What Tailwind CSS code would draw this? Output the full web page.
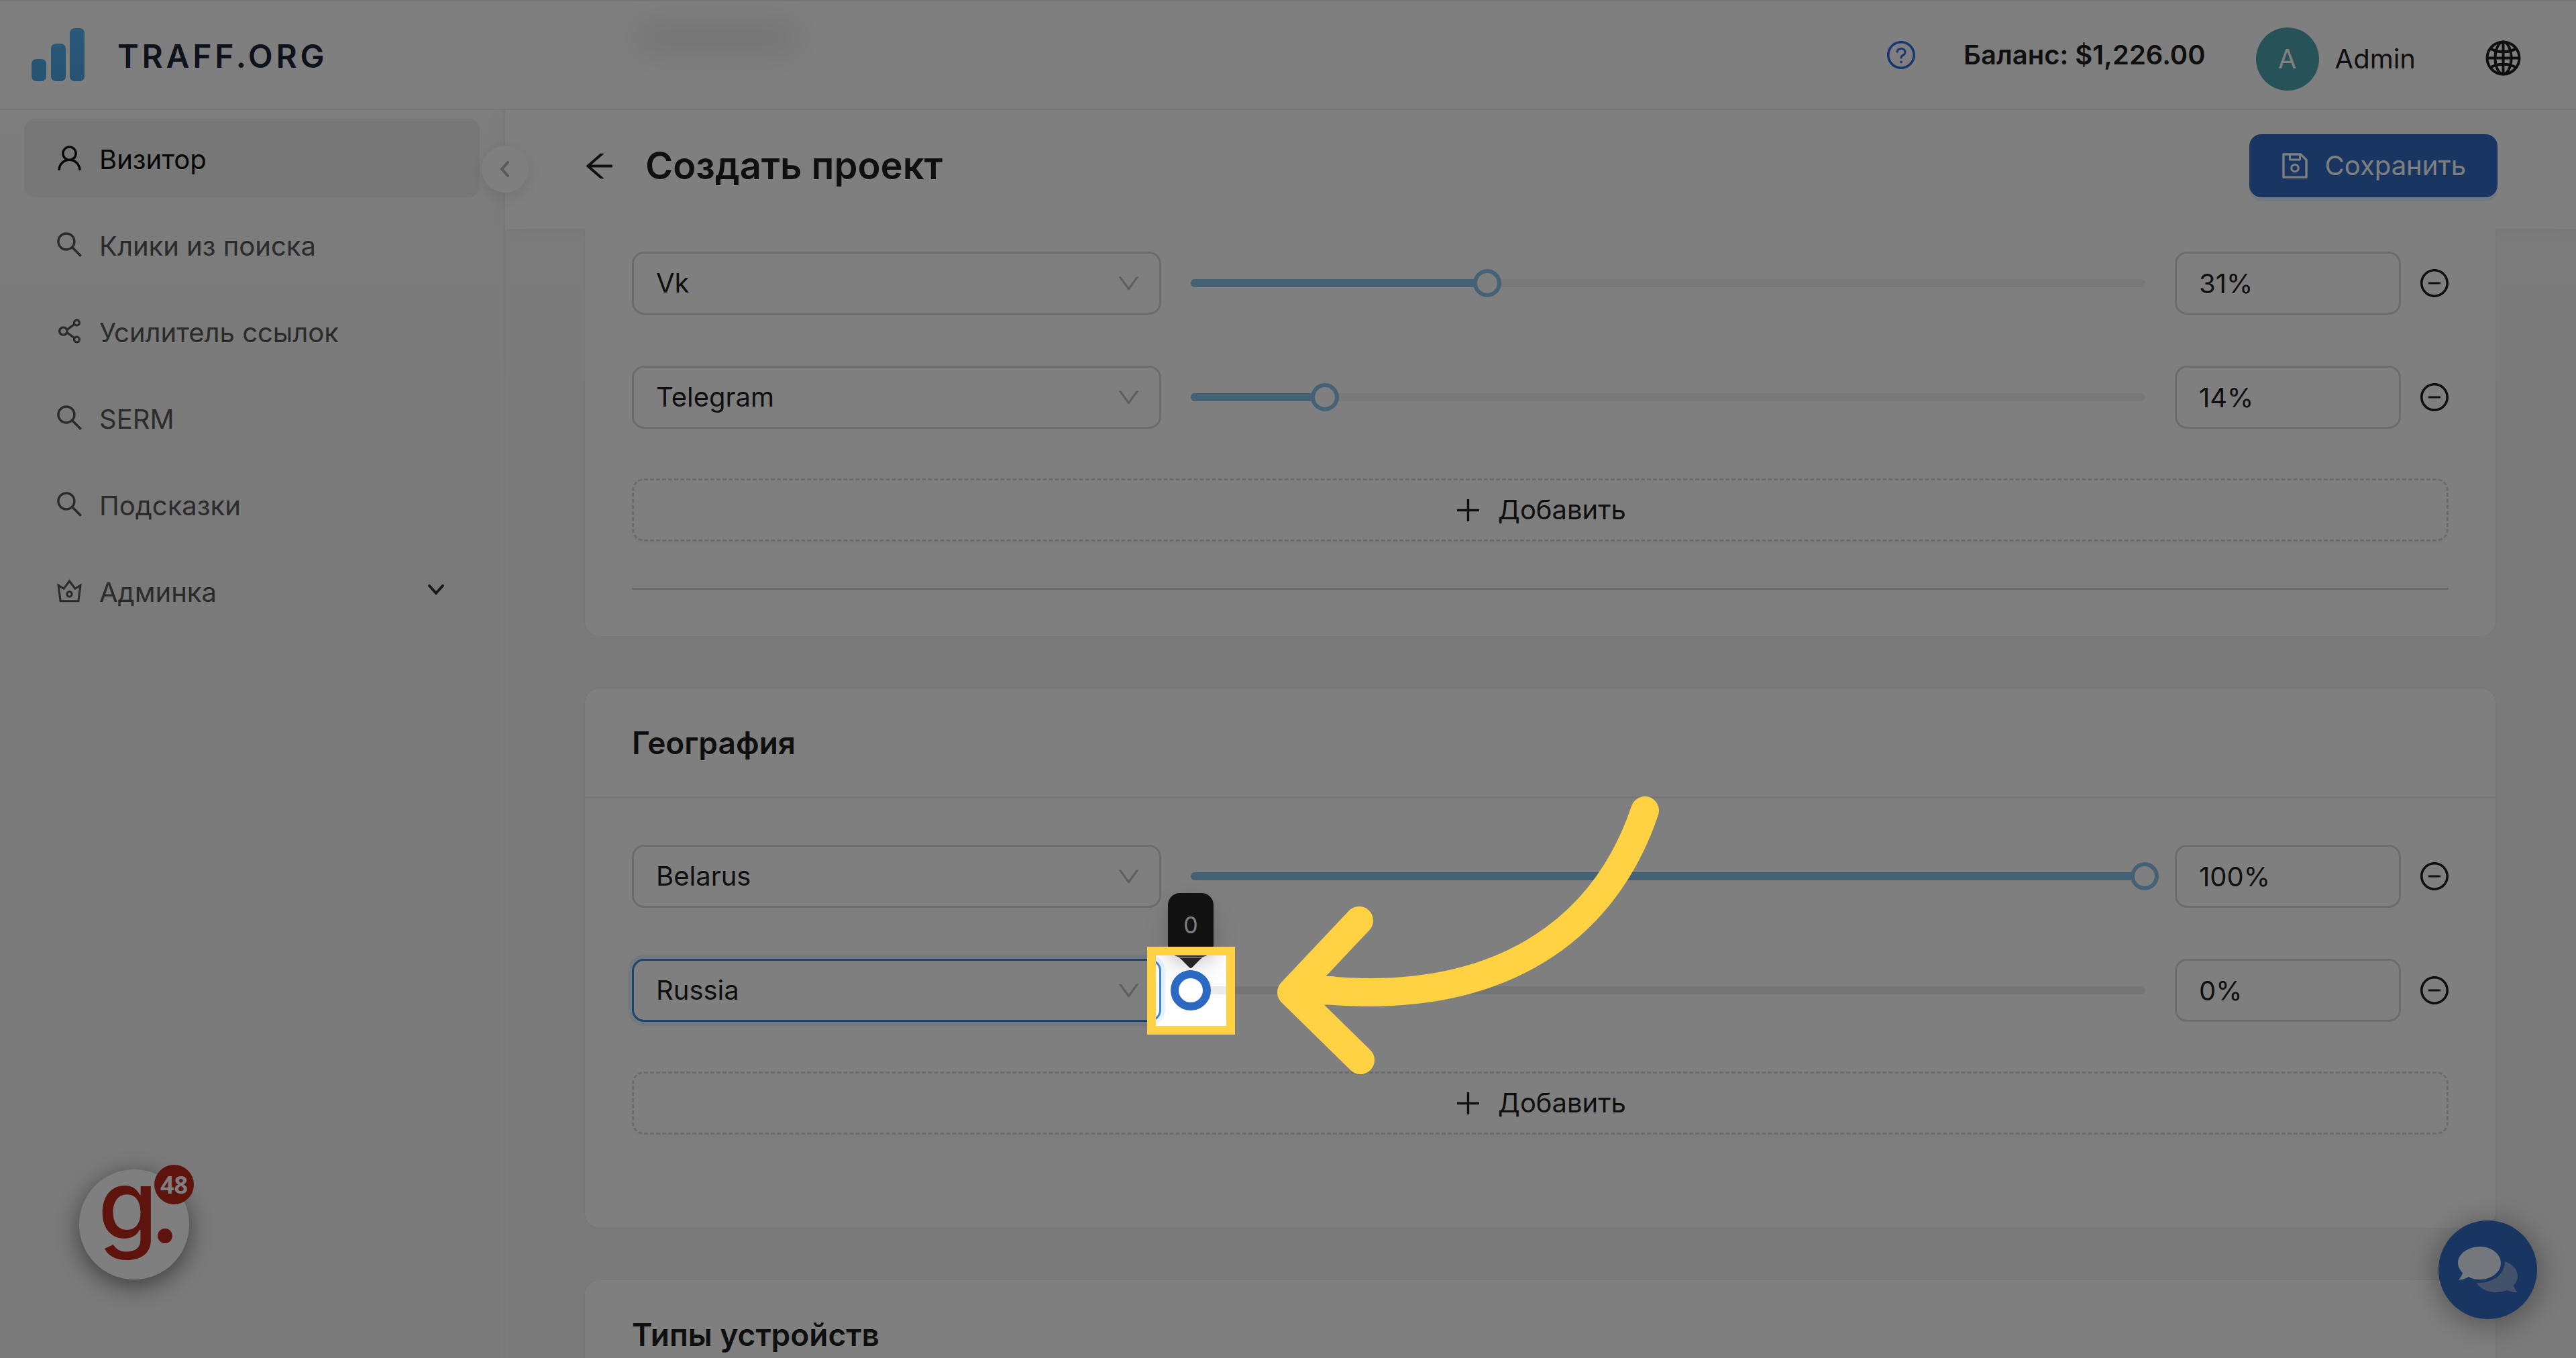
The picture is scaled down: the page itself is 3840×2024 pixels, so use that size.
<!DOCTYPE html>
<html lang="ru">

<head>
    <meta charset="UTF-8">
    <meta name="viewport" content="width=device-width, initial-scale=1.0">
    <title>Создать проект - TRAFF.ORG</title>
    <script src="https://cdn.jsdelivr.net/npm/@tailwindcss/browser@4"></script>
</head>

<body class="bg-[#f5f5f5]">

    <!-- Icon set -->
    <svg class="hidden">
        <symbol id="user" viewBox="64 64 896 896"><path d="M858.5 763.6a374 374 0 00-80.6-119.5 375.63 375.63 0 00-119.5-80.6c-.4-.2-.8-.3-1.2-.5C719.5 518 760 444.7 760 362c0-137-111-248-248-248S264 225 264 362c0 82.7 40.5 156 102.8 201.1-.4.2-.8.3-1.2.5-44.8 18.9-85 46-119.5 80.6a375.63 375.63 0 00-80.6 119.5A371.7 371.7 0 00136 901.8a8 8 0 008 8.2h60c4.4 0 7.9-3.5 8-7.8 2-77.2 33-149.5 87.8-204.3 56.7-56.7 132-87.9 212.2-87.9s155.5 31.2 212.2 87.9C779 752.7 810 825 812 902.2c.1 4.4 3.6 7.8 8 7.8h60a8 8 0 008-8.2c-1-47.8-10.9-94.3-29.5-138.2zM512 534c-45.9 0-89.1-17.9-121.6-50.4S340 407.9 340 362c0-45.9 17.9-89.1 50.4-121.6S466.1 190 512 190s89.1 17.9 121.6 50.4S684 316.1 684 362c0 45.9-17.9 89.1-50.4 121.6S557.9 534 512 534z"/></symbol>
        <symbol id="search" viewBox="64 64 896 896"><path d="M909.6 854.5L649.9 594.8C690.2 542.7 712 479 712 412c0-80.2-31.3-155.4-87.9-212.1-56.6-56.7-132-87.9-212.1-87.9s-155.5 31.3-212.1 87.9C143.2 256.5 112 331.8 112 412c0 80.1 31.3 155.5 87.9 212.1C256.5 680.8 331.8 712 412 712c67 0 130.6-21.8 182.7-62l259.7 259.6a8.2 8.2 0 0011.6 0l43.6-43.5a8.2 8.2 0 000-11.6zM570.4 570.4C528 612.7 471.8 636 412 636s-116-23.3-158.4-65.6C211.3 528 188 471.8 188 412s23.3-116.1 65.6-158.4C296 211.3 352.2 188 412 188s116.1 23.2 158.4 65.6S636 352.2 636 412s-23.3 116.1-65.6 158.4z"/></symbol>
        <symbol id="share" viewBox="64 64 896 896"><path d="M752 664c-28.5 0-54.8 10-75.4 26.7L469.4 540.8a160.68 160.68 0 000-57.6l207.2-149.9C697.2 350 723.5 360 752 360c66.2 0 120-53.8 120-120s-53.8-120-120-120-120 53.8-120 120c0 11.6 1.6 22.7 4.7 33.3L439.9 415.8C410.7 377.1 364.3 352 312 352c-88.4 0-160 71.6-160 160s71.6 160 160 160c52.3 0 98.7-25.1 127.9-63.8l196.8 142.5c-3.1 10.6-4.7 21.8-4.7 33.3 0 66.2 53.8 120 120 120s120-53.8 120-120-53.8-120-120-120zm0-476c28.7 0 52 23.3 52 52s-23.3 52-52 52-52-23.3-52-52 23.3-52 52-52zM312 600c-48.5 0-88-39.5-88-88s39.5-88 88-88 88 39.5 88 88-39.5 88-88 88zm440 236c-28.7 0-52-23.3-52-52s23.3-52 52-52 52 23.3 52 52-23.3 52-52 52z"/></symbol>
        <symbol id="crown" viewBox="64 64 896 896"><path d="M899.6 276.5L705 396.4 518.4 147.5a8.06 8.06 0 00-12.9 0L319 396.4 124.3 276.5c-5.7-3.5-13.1 1.2-12.2 7.9L188.5 865c1.1 7.9 7.9 14 16 14h615.1c8 0 14.9-6 15.9-14l76.4-580.6c.8-6.7-6.5-11.4-12.3-7.9zm-126 534.1H250.3l-53.8-409.4 139.8 86.1L512 252.9l175.7 234.4 139.8-86.1-53.9 409.4zM512 509c-62.1 0-112.6 50.5-112.6 112.6S449.9 734.2 512 734.2s112.6-50.5 112.6-112.6S574.1 509 512 509zm0 160.9c-26.6 0-48.2-21.6-48.2-48.3 0-26.6 21.6-48.3 48.2-48.3s48.2 21.6 48.2 48.3c0 26.6-21.6 48.3-48.2 48.3z"/></symbol>
        <symbol id="save" viewBox="64 64 896 896"><path d="M893.3 293.3L730.7 130.7c-7.5-7.5-16.7-13-26.7-16V112H144c-17.7 0-32 14.3-32 32v736c0 17.7 14.3 32 32 32h736c17.7 0 32-14.3 32-32V338.5c0-17-6.7-33.2-18.7-45.2zM384 184h256v104H384V184zm456 656H184V184h136v136c0 17.7 14.3 32 32 32h320c17.7 0 32-14.3 32-32V205.8l136 136V840zM512 442c-79.5 0-144 64.5-144 144s64.5 144 144 144 144-64.5 144-144-64.5-144-144-144zm0 224c-44.2 0-80-35.8-80-80s35.8-80 80-80 80 35.8 80 80-35.8 80-80 80z"/></symbol>
        <symbol id="back" viewBox="64 64 896 896"><path d="M872 474H286.9l350.2-304c5.6-4.9 2.2-14-5.2-14h-88.5c-3.9 0-7.6 1.4-10.5 3.9L155 487.8a31.96 31.96 0 000 48.3L535.1 866c1.5 1.3 3.3 2 5.2 2h91.5c7.4 0 10.8-9.2 5.2-14L286.9 550H872c4.4 0 8-3.6 8-8v-60c0-4.4-3.6-8-8-8z"/></symbol>
        <symbol id="down" viewBox="64 64 896 896"><path d="M884 256h-75c-5.1 0-9.9 2.5-12.9 6.6L512 654.2 227.9 262.6c-3-4.1-7.8-6.6-12.9-6.6h-75c-6.5 0-10.3 7.4-6.5 12.7l352.6 486.1c12.8 17.6 39 17.6 51.7 0l352.6-486.1c3.9-5.3.1-12.7-6.4-12.7z"/></symbol>
        <symbol id="question" viewBox="64 64 896 896"><path d="M512 64C264.6 64 64 264.6 64 512s200.6 448 448 448 448-200.6 448-448S759.4 64 512 64zm0 820c-205.4 0-372-166.6-372-372s166.6-372 372-372 372 166.6 372 372-166.6 372-372 372z"/><path d="M623.6 316.7C593.6 290.4 554 276 512 276s-81.6 14.5-111.6 40.7C369.2 344 352 380.7 352 420v7.6c0 4.4 3.6 8 8 8h48c4.4 0 8-3.6 8-8V420c0-44.1 43.1-80 96-80s96 35.9 96 80c0 31.1-22 59.6-56.1 72.7-21.2 8.1-39.2 22.3-52.1 40.9-13.1 19-19.9 41.8-19.9 64.9V620c0 4.4 3.6 8 8 8h48c4.4 0 8-3.6 8-8v-22.7a48.3 48.3 0 0130.9-44.8c59-22.7 97.1-74.7 97.1-132.5.1-39.3-17.1-76-48.3-103.3zM472 732a40 40 0 1080 0 40 40 0 10-80 0z"/></symbol>
        <symbol id="minus" viewBox="64 64 896 896"><path d="M696 480H328c-4.400 0-8 3.600-8 8v48c0 4.400 3.600 8 8 8h368c4.400 0 8-3.600 8-8v-48c0-4.400-3.600-8-8-8z"/><path d="M512 64C264.600 64 64 264.600 64 512s200.600 448 448 448 448-200.600 448-448S759.400 64 512 64zm0 820c-205.400 0-372-166.600-372-372s166.600-372 372-372 372 166.600 372 372-166.600 372-372 372z"/></symbol>
        <symbol id="plus" viewBox="64 64 896 896"><path d="M482 152h60q8 0 8 8v704q0 8-8 8h-60q-8 0-8-8V160q0-8 8-8z"/><path d="M160 474h704q8 0 8 8v60q0 8-8 8H160q-8 0-8-8v-60q0-8 8-8z"/></symbol>
    </svg>

    <div class="relative flex h-screen flex-col overflow-hidden bg-[linear-gradient(#ffffff,#f5f5f5_28%)] font-[Inter,'Noto_Sans',sans-serif] text-[40px] leading-[64px] text-[#1f1f1f]">

        <!-- Top bar -->
        <header class="relative flex h-[164px] shrink-0 items-center border-y-2 border-[#ececec] bg-white pr-[82px] pl-[47px]">
            <a href="#" class="flex items-center gap-[48px]">
                <svg class="h-[80px] w-[80px]" viewBox="0 0 80 80">
                    <defs>
                        <linearGradient id="bars" x1="0" y1="0" x2="0" y2="80" gradientUnits="userSpaceOnUse">
                            <stop offset="0" stop-color="#55b2f2"/>
                            <stop offset="1" stop-color="#4ea6e4"/>
                        </linearGradient>
                    </defs>
                    <g fill="url(#bars)">
                        <rect x="0" y="46" width="22" height="33" rx="7"/>
                        <rect x="29" y="23" width="22" height="56" rx="7"/>
                        <rect x="57" y="0" width="22" height="79" rx="7"/>
                    </g>
                </svg>
                <span class="pt-1 text-5xl font-semibold tracking-widest text-[#1c2438]">TRAFF.ORG</span>
            </a>
            <!-- scrolled card title behind the bar -->
            <div class="absolute top-[26px] left-[944px] h-[56px] w-[250px] rounded-full bg-black/8 blur-[20px]"></div>
            <div class="ml-auto flex items-center">
                <button class="mr-[72px] text-[#2f6fe8]" aria-label="Помощь"><svg class="h-[42px] w-[42px] fill-current"><use href="#question"/></svg></button>
                <span class="mr-[75px] font-semibold">Баланс: $1,226.00</span>
                <div class="mt-3 flex items-center gap-6">
                    <span class="flex h-[94px] w-[94px] items-center justify-center rounded-full bg-[#4ea4ae] text-white">A</span>
                    <span>Admin</span>
                </div>
                <button class="mt-2 ml-[104px]" aria-label="Язык">
                    <svg class="h-[53px] w-[53px]" viewBox="0 0 53 53" fill="none" stroke="currentColor" stroke-width="4">
                        <circle cx="26.500" cy="26.500" r="24"/>
                        <ellipse cx="26.500" cy="26.500" rx="12" ry="24"/>
                        <path d="M26.500 2v49M2 26.500h49M7 12c10 7 29 7 39 0M7 41c10-7 29-7 39 0"/>
                    </svg>
                </button>
            </div>
        </header>

        <div class="flex min-h-0 flex-1">

            <!-- Side menu -->
            <aside class="relative w-[753px] shrink-0 border-r-2 border-[#efefef] px-[36px] pt-[13px]">
                <nav class="flex flex-col gap-3 text-[#565656]">
                    <a href="#" class="flex h-[117px] items-center gap-6 rounded-2xl bg-[#efefef] px-[47px] text-[#0d0d0d]"><svg class="h-[41px] w-[41px] fill-current"><use href="#user"/></svg><span class="pt-1">Визитор</span></a>
                    <a href="#" class="flex h-[117px] items-center gap-6 px-[47px]"><svg class="h-[41px] w-[41px] fill-current"><use href="#search"/></svg><span class="pt-1">Клики из поиска</span></a>
                    <a href="#" class="flex h-[117px] items-center gap-6 px-[47px]"><svg class="h-[41px] w-[41px] fill-current"><use href="#share"/></svg><span class="pt-1">Усилитель ссылок</span></a>
                    <a href="#" class="flex h-[117px] items-center gap-6 px-[47px]"><svg class="h-[41px] w-[41px] fill-current"><use href="#search"/></svg><span class="pt-1">SERM</span></a>
                    <a href="#" class="flex h-[117px] items-center gap-6 px-[47px]"><svg class="h-[41px] w-[41px] fill-current"><use href="#search"/></svg><span class="pt-1">Подсказки</span></a>
                    <a href="#" class="flex h-[117px] items-center gap-6 px-[47px]"><svg class="h-[41px] w-[41px] fill-current"><use href="#crown"/></svg><span class="pt-1">Админка</span>
                        <svg class="mr-1 ml-auto h-[28px] w-[28px]" viewBox="0 0 28 28" fill="none" stroke="#333" stroke-width="4" stroke-linecap="round"><path d="M4 6l10 11L24 6"/></svg>
                    </a>
                </nav>
                <button class="absolute top-[53px] -right-[37px] z-10 flex h-[70px] w-[70px] items-center justify-center rounded-full bg-white shadow-[0_6px_24px_rgba(0,0,0,0.1)]" aria-label="Свернуть меню">
                    <svg class="h-[28px] w-[28px]" viewBox="0 0 28 28" fill="none" stroke="#b4b4b4" stroke-width="4" stroke-linecap="round"><path d="M18 4L9 14l9 10"/></svg>
                </button>
            </aside>

            <main class="min-w-0 flex-1">

                <!-- Page title -->
                <div class="flex h-[177px] items-center bg-white pr-[117px] pb-[11px] pl-[117px] shadow-[0_2px_30px_rgba(0,0,0,0.06)]">
                    <button aria-label="Назад"><svg class="h-[47px] w-[47px] fill-current"><use href="#back"/></svg></button>
                    <h1 class="ml-[45px] text-[56px] font-semibold">Создать проект</h1>
                    <button class="ml-auto flex h-[94px] items-center gap-6 rounded-[18px] bg-[#306cc2] px-[47px] text-white shadow-[0_6px_0_rgba(5,145,255,0.1)]">
                        <svg class="h-[42px] w-[42px] fill-current"><use href="#save"/></svg>Сохранить
                    </button>
                </div>

                <div class="flex flex-col gap-[74px] pr-[118px] pl-[117px]">

                    <!-- Sources -->
                    <section class="rounded-b-3xl border-2 border-t-0 border-[#f0f0f0] bg-white px-[70px] pt-[34px] pb-[69px]">
                        <div class="flex flex-col gap-[76px]">
                            <div class="flex items-center">
                                <div class="relative w-[789px] shrink-0">
                                    <select aria-label="Источник" class="block h-[94px] w-full appearance-none rounded-[18px] border-3 border-[#d9d9d9] bg-white px-[33px]"><option>Vk</option></select>
                                    <svg class="pointer-events-none absolute top-[30px] right-[31px] h-[35px] w-[35px] fill-[#bfbfbf]"><use href="#down"/></svg>
                                </div>
                                <div class="relative mx-[44px] h-3 flex-1 rounded-full bg-[#f0f0f0]">
                                    <div class="h-3 rounded-full bg-[#88c2ec]" style="width: 31%"></div>
                                    <input type="range" value="31" aria-label="Доля Vk" class="absolute -top-[15px] -left-[20px] h-[42px] w-[calc(100%+40px)] appearance-none bg-transparent [&::-webkit-slider-thumb]:h-[42px] [&::-webkit-slider-thumb]:w-[42px] [&::-webkit-slider-thumb]:appearance-none [&::-webkit-slider-thumb]:rounded-full [&::-webkit-slider-thumb]:border-6 [&::-webkit-slider-thumb]:border-solid [&::-webkit-slider-thumb]:border-[#88c2ec] [&::-webkit-slider-thumb]:bg-white">
                                </div>
                                <input type="text" value="31%" aria-label="Процент Vk" class="h-[94px] w-[337px] rounded-[18px] border-3 border-[#d9d9d9] bg-white px-[33px]">
                                <button class="ml-[29px]" aria-label="Удалить"><svg class="h-[42px] w-[42px] fill-current"><use href="#minus"/></svg></button>
                            </div>
                            <div class="flex items-center">
                                <div class="relative w-[789px] shrink-0">
                                    <select aria-label="Источник" class="block h-[94px] w-full appearance-none rounded-[18px] border-3 border-[#d9d9d9] bg-white px-[33px]"><option>Telegram</option></select>
                                    <svg class="pointer-events-none absolute top-[30px] right-[31px] h-[35px] w-[35px] fill-[#bfbfbf]"><use href="#down"/></svg>
                                </div>
                                <div class="relative mx-[44px] h-3 flex-1 rounded-full bg-[#f0f0f0]">
                                    <div class="h-3 rounded-full bg-[#88c2ec]" style="width: 14%"></div>
                                    <input type="range" value="14" aria-label="Доля Telegram" class="absolute -top-[15px] -left-[20px] h-[42px] w-[calc(100%+40px)] appearance-none bg-transparent [&::-webkit-slider-thumb]:h-[42px] [&::-webkit-slider-thumb]:w-[42px] [&::-webkit-slider-thumb]:appearance-none [&::-webkit-slider-thumb]:rounded-full [&::-webkit-slider-thumb]:border-6 [&::-webkit-slider-thumb]:border-solid [&::-webkit-slider-thumb]:border-[#88c2ec] [&::-webkit-slider-thumb]:bg-white">
                                </div>
                                <input type="text" value="14%" aria-label="Процент Telegram" class="h-[94px] w-[337px] rounded-[18px] border-3 border-[#d9d9d9] bg-white px-[33px]">
                                <button class="ml-[29px]" aria-label="Удалить"><svg class="h-[42px] w-[42px] fill-current"><use href="#minus"/></svg></button>
                            </div>
                        </div>
                        <button class="mt-[74px] flex h-[94px] w-full items-center justify-center gap-6 rounded-[18px] border-3 border-dashed border-[#d9d9d9] bg-white shadow-[0_6px_0_rgba(0,0,0,0.02)]">
                            <svg class="h-[41px] w-[41px] fill-current"><use href="#plus"/></svg>Добавить
                        </button>
                        <hr class="mt-[69px] border-t-3 border-[#d6d6d6]">
                    </section>

                    <!-- Geography -->
                    <section class="rounded-3xl border-2 border-[#f0f0f0] bg-white">
                        <h2 class="flex h-[164px] items-center border-b-3 border-[#f0f0f0] px-[70px] text-[46px] font-semibold">География</h2>
                        <div class="px-[70px] pt-[69px] pb-[139px]">
                            <div class="flex flex-col gap-[76px]">
                                <div class="flex items-center">
                                    <div class="relative w-[789px] shrink-0">
                                        <select aria-label="Страна" class="block h-[94px] w-full appearance-none rounded-[18px] border-3 border-[#d9d9d9] bg-white px-[33px]"><option>Belarus</option></select>
                                        <svg class="pointer-events-none absolute top-[30px] right-[31px] h-[35px] w-[35px] fill-[#bfbfbf]"><use href="#down"/></svg>
                                    </div>
                                    <div class="relative mx-[44px] h-3 flex-1 rounded-full bg-[#f0f0f0]">
                                        <div class="h-3 rounded-full bg-[#88c2ec]" style="width: 100%"></div>
                                        <input type="range" value="100" aria-label="Доля Belarus" class="absolute -top-[15px] -left-[20px] h-[42px] w-[calc(100%+40px)] appearance-none bg-transparent [&::-webkit-slider-thumb]:h-[42px] [&::-webkit-slider-thumb]:w-[42px] [&::-webkit-slider-thumb]:appearance-none [&::-webkit-slider-thumb]:rounded-full [&::-webkit-slider-thumb]:border-6 [&::-webkit-slider-thumb]:border-solid [&::-webkit-slider-thumb]:border-[#88c2ec] [&::-webkit-slider-thumb]:bg-white">
                                    </div>
                                    <input type="text" value="100%" aria-label="Процент Belarus" class="h-[94px] w-[337px] rounded-[18px] border-3 border-[#d9d9d9] bg-white px-[33px]">
                                    <button class="ml-[29px]" aria-label="Удалить"><svg class="h-[42px] w-[42px] fill-current"><use href="#minus"/></svg></button>
                                </div>
                                <div class="flex items-center">
                                    <div class="relative w-[789px] shrink-0">
                                        <select aria-label="Страна" class="block h-[94px] w-full appearance-none rounded-[18px] border-3 border-[#3f86d4] bg-white px-[33px] shadow-[0_0_0_6px_rgba(5,145,255,0.1)]"><option>Russia</option></select>
                                        <svg class="pointer-events-none absolute top-[30px] right-[31px] h-[35px] w-[35px] fill-[#bfbfbf]"><use href="#down"/></svg>
                                    </div>
                                    <div class="relative mx-[44px] h-3 flex-1 rounded-full bg-[#ebebeb]">
                                        <!-- value tooltip -->
                                        <div class="absolute bottom-[39px] -left-[34px] flex flex-col items-center gap-px">
                                            <div class="flex h-[95px] w-[68px] items-center justify-center rounded-[18px] bg-[#242424] text-[34px] text-white shadow-[0_18px_48px_rgba(0,0,0,0.12),0_9px_18px_rgba(0,0,0,0.1)]">0</div>
                                            <svg class="h-4 w-10 fill-[#242424]" viewBox="0 0 40 16"><path d="M0 0h40c-3 0-5 2-7 4L22 15q-2 2-4 0L7 4C5 2 3 0 0 0z"/></svg>
                                        </div>
                                        <input type="range" value="0" aria-label="Доля Russia" class="absolute -top-[24px] -left-[30px] h-[60px] w-[calc(100%+60px)] appearance-none bg-transparent [&::-webkit-slider-thumb]:h-[60px] [&::-webkit-slider-thumb]:w-[60px] [&::-webkit-slider-thumb]:appearance-none [&::-webkit-slider-thumb]:rounded-full [&::-webkit-slider-thumb]:border-12 [&::-webkit-slider-thumb]:border-solid [&::-webkit-slider-thumb]:border-[#2b69c3] [&::-webkit-slider-thumb]:bg-white">
                                        <!-- tour spotlight, its shadow dims the rest of the page -->
                                        <div class="pointer-events-none absolute -top-[59px] -left-[65px] z-50 h-[131px] w-[131px] border-13 border-[#ffd243] shadow-[0_0_0_4000px_rgba(0,0,0,0.5)]"></div>
                                        <svg class="pointer-events-none absolute -top-[290px] left-[125px] z-50 h-[430px] w-[580px]" viewBox="0 0 580 430" fill="none" stroke="#ffd243" stroke-width="42" stroke-linecap="round" stroke-linejoin="round">
                                            <path d="M552 28C490 212 330 318 76 296"/>
                                            <path d="M126 192L25 299l103 101M25 299l60-3"/>
                                        </svg>
                                    </div>
                                    <input type="text" value="0%" aria-label="Процент Russia" class="h-[94px] w-[337px] rounded-[18px] border-3 border-[#d9d9d9] bg-white px-[33px]">
                                    <button class="ml-[29px]" aria-label="Удалить"><svg class="h-[42px] w-[42px] fill-current"><use href="#minus"/></svg></button>
                                </div>
                            </div>
                            <button class="mt-[74px] flex h-[94px] w-full items-center justify-center gap-6 rounded-[18px] border-3 border-dashed border-[#d9d9d9] bg-white shadow-[0_6px_0_rgba(0,0,0,0.02)]">
                                <svg class="h-[41px] w-[41px] fill-current"><use href="#plus"/></svg>Добавить
                            </button>
                        </div>
                    </section>

                    <!-- Devices -->
                    <section class="rounded-t-3xl border-2 border-[#f0f0f0] bg-white">
                        <h2 class="flex h-[164px] items-center border-b-3 border-[#f0f0f0] px-[70px] text-[46px] font-semibold">Типы устройств</h2>
                    </section>
                </div>
            </main>
        </div>

        <!-- Floating widgets -->
        <button class="absolute bottom-[117px] left-[118px] h-[164px] w-[164px] rounded-full bg-white text-[#be261a] shadow-[0_9px_36px_rgba(0,0,0,0.5)]" aria-label="Подсказки">
            <span class="absolute -top-[20px] left-[28px] text-[144px] leading-none font-medium">g</span>
            <span class="absolute top-[88px] left-[117px] h-[22px] w-[22px] rounded-full bg-[#be261a]"></span>
            <span class="absolute -top-[7px] -right-[7px] flex h-[59px] w-[59px] items-center justify-center rounded-full bg-[#be261a] font-['Open_Sans',sans-serif] text-4xl font-bold text-white">48</span>
        </button>
        <button class="absolute right-[58px] bottom-[58px] h-[147px] w-[147px] rounded-full bg-[#306cc2] shadow-[0_6px_48px_rgba(0,0,0,0.4)]" aria-label="Чат">
            <svg class="h-[147px] w-[147px]" viewBox="0 0 147 147">
                <path fill="#84a4d4" d="M99 61C110 65 118 73 118 83c0 5-2 10-6 14 1 4 3 7 6 10-5 1-11-1-16-3-16 6-37 3-45-11 24 1 42-13 42-32z"/>
                <path fill="#e8eef8" d="M62 39c17 0 31 11 31 24.500S79 88 62 88c-6 0-12-1-17-4-5 3-10 5-15 4 3-3 5-6 6-10-4-4-7-9-7-15C29 50 44 39 62 39z"/>
            </svg>
        </button>
    </div>
</body>

</html>
